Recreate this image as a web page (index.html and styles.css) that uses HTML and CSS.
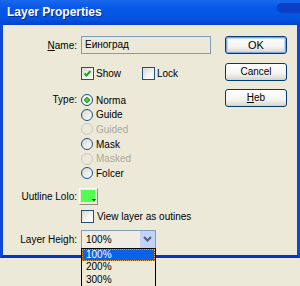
FILE: index.html
```html
<!DOCTYPE html>
<html>
<head>
    <title>Layer Properties</title>
    <link rel="stylesheet" href="styles.css">
</head>
<body>
    <div class="window">
        <div class="titlebar">
            <span class="title">Layer Properties</span>
            <span class="close"></span>
        </div>
        <div class="client">
            <div class="form">
                <div class="row">
                    <span class="lbl"><u>N</u>ame:</span>
                    <div class="text">Еиноград</div>
                </div>

                <div class="row checks">
                    <span class="lbl"></span>
                    <span class="opt show">
                        <span class="box">
                            <svg width="11" height="11" viewBox="0 0 11 11"><path d="M2.5 5.5l2 2L8.5 3" stroke="#21a121" stroke-width="2" fill="none"/></svg>
                        </span>Show
                    </span>
                    <span class="opt"><span class="box"></span>Lock</span>
                </div>

                <div class="row type">
                    <span class="lbl">Type:</span>
                    <div class="radios">
                        <div class="radio"><span class="dot on"></span>Norma</div>
                        <div class="radio"><span class="dot"></span>Guide</div>
                        <div class="radio off"><span class="dot"></span>Guided</div>
                        <div class="radio"><span class="dot"></span>Mask</div>
                        <div class="radio off"><span class="dot"></span>Masked</div>
                        <div class="radio"><span class="dot"></span>Folcer</div>
                    </div>
                </div>

                <div class="row outline">
                    <span class="lbl">Uutline Lolo:</span>
                    <span class="swatch">
                        <svg width="15" height="13" viewBox="0 0 15 13"><rect x="0" y="0" width="14" height="12" fill="#50ff50"/><path d="M11 9h4l-2 2z" fill="#000"/></svg>
                    </span>
                </div>

                <div class="row outlines">
                    <span class="lbl"></span>
                    <span class="opt"><span class="box"></span>View layer as outines</span>
                </div>

                <div class="row height">
                    <span class="lbl">Layer Heigh:</span>
                    <div class="select">
                        <span class="sel-val">100%</span>
                        <span class="sel-btn">
                            <svg width="9" height="6" viewBox="0 0 9 6"><path d="M1 1l3.5 3.5L8 1" stroke="#4d6185" stroke-width="2" fill="none"/></svg>
                        </span>
                    </div>
                </div>
            </div>

            <div class="buttons">
                <div class="btn default">OK</div>
                <div class="btn">Cancel</div>
                <div class="btn"><u>H</u>eb</div>
            </div>
        </div>
    </div>

    <!-- open dropdown of Layer Height, drawn over the window edge -->
    <div class="list">
        <div class="item sel">100%</div>
        <div class="item">200%</div>
        <div class="item">300%</div>
    </div>
</body>
</html>
```

FILE: styles.css
```css
html {
    height: 100%;
}
body {
    margin: 0;
    min-height: 100%;
    position: relative;
    background: #ece9d8;
    font-family: "Liberation Sans", Arial, sans-serif;
    font-size: 10px;
    color: #000;
}
.window {
    width: 300px;
    height: 258px;
    display: flex;
    flex-direction: column;
}
.titlebar {
    height: 25px;
    flex: none;
    box-sizing: border-box;
    padding: 0 0 2px 7px;
    display: flex;
    align-items: center;
    background: linear-gradient(#1a68ee, #0658e6 30%, #0454e2 75%, #0242c6);
}
.title {
    color: #fff;
    font-weight: bold;
    font-size: 12px;
    text-shadow: 1px 1px #0c2a8e;
}
.close {
    margin-left: auto;
    align-self: flex-start;
    margin-top: 3px;
    width: 23px;
    height: 10px;
    background: #0a3fc6;
    border-radius: 5px 0 0 6px;
}
.client {
    flex: 1;
    display: flex;
    border: solid #0b48d9;
    border-width: 0 3px 3px 3px;
    border-bottom-color: #0a35b8;
    padding-top: 11px;
}
.form {
    width: 208px;
}
.row {
    display: flex;
    align-items: center;
}
.lbl {
    width: 78px;
    flex: none;
    box-sizing: border-box;
    padding-right: 4px;
    text-align: right;
}
.text {
    width: 130px;
    height: 18px;
    box-sizing: border-box;
    border: 1px solid #7f9db9;
    padding-left: 3px;
    line-height: 16px;
    background: #ece9d8;
}

/* checkboxes */
.checks {
    margin-top: 13px;
}
.opt {
    display: flex;
    align-items: center;
    gap: 2px;
}
.opt.show {
    width: 61px;
    flex: none;
}
.box {
    width: 13px;
    height: 13px;
    flex: none;
    box-sizing: border-box;
    border: 1px solid #1c5180;
    background: linear-gradient(135deg, #d8d8d0, #f6f6f3 60%, #fff);
    display: flex;
}

/* radios */
.type {
    margin-top: 13px;
    align-items: flex-start;
}
.type .lbl {
    line-height: 14.6px;
}
.radios {
    display: flex;
    flex-direction: column;
}
.radio {
    height: 14.6px;
    display: flex;
    align-items: center;
    gap: 3px;
}
.dot {
    width: 12px;
    height: 12px;
    flex: none;
    box-sizing: border-box;
    border: 1px solid #1c5180;
    border-radius: 50%;
    background: linear-gradient(135deg, #d8d8d0, #fff);
}
.dot.on {
    background: radial-gradient(circle, #6ae06a 0, #21a121 2.5px, #fff 3px, #ecece6 5px);
}
.radio.off {
    color: #aca899;
}
.radio.off .dot {
    border-color: #cac8bb;
    background: none;
}

/* color swatch */
.outline {
    margin-top: 7px;
}
.swatch {
    margin-left: -2px;
    width: 19px;
    height: 17px;
    box-sizing: border-box;
    border: 1px solid;
    border-color: #fff #8d8b80 #8d8b80 #fff;
    padding: 1px;
    display: flex;
}
.outlines {
    margin-top: 5px;
}
.outlines .opt {
    gap: 3px;
}

/* select */
.height {
    margin-top: 7px;
}
.select {
    width: 75px;
    height: 19px;
    box-sizing: border-box;
    border: 1px solid #7f9db9;
    background: #eeece3;
    display: flex;
    align-items: center;
}
.sel-val {
    flex: 1;
    padding-left: 4px;
}
.sel-btn {
    width: 15px;
    height: 17px;
    background: #c3d3f7;
    display: flex;
    align-items: center;
    justify-content: center;
}
.list {
    position: absolute;
    left: 81px;
    top: 248px;
    z-index: 2;
    width: 75px;
    box-sizing: border-box;
    border: 1px solid #000;
    background: #ece9d8;
}
.item {
    height: 12.3px;
    line-height: 12px;
    padding-left: 4px;
}
.item.sel {
    background: #0c61e6;
    color: #fff;
    outline: 1px dotted #e8a040;
    outline-offset: -1px;
}

/* buttons */
.buttons {
    margin-left: auto;
    margin-right: 10px;
    display: flex;
    flex-direction: column;
    gap: 8.5px;
}
.btn {
    width: 62px;
    height: 18px;
    box-sizing: border-box;
    border: 1px solid #003c74;
    border-radius: 3px;
    background: linear-gradient(#fff, #f5f4ef 60%, #d8d3c8);
    text-align: center;
    line-height: 16px;
}
.btn.default {
    font-size: 11px;
    box-shadow: inset 0 0 0 1px #7ea4e8, inset 0 0 0 2px #c6d7f5;
}
```
